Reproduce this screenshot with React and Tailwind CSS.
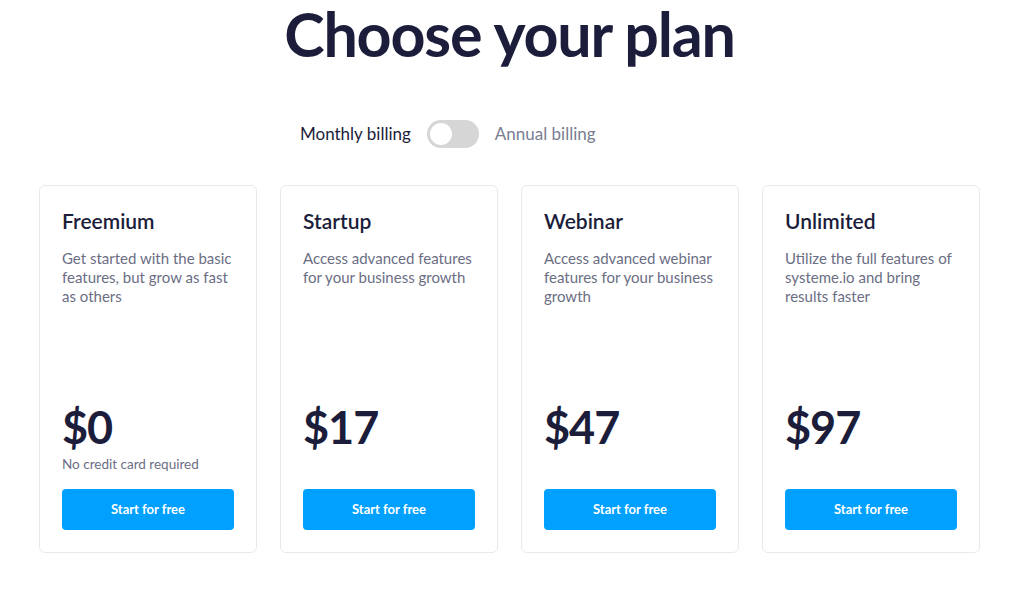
import React from 'react';

const plans = [
  {
    name: 'Freemium',
    desc: 'Get started with the basic features, but grow as fast as others',
    price: '$0',
    note: 'No credit card required',
  },
  {
    name: 'Startup',
    desc: 'Access advanced features for your business growth',
    price: '$17',
  },
  {
    name: 'Webinar',
    desc: 'Access advanced webinar features for your business growth',
    price: '$47',
  },
  {
    name: 'Unlimited',
    desc: 'Utilize the full features of systeme.io and bring results faster',
    price: '$97',
  },
];

const PlanCard = ({ plan }) => (
  <div className="flex flex-col rounded-md border border-[#e8e9ee] bg-white px-[22px] pt-[22px] pb-[22px]">
    <h3 className="text-[21px] font-semibold leading-[26px] text-[#1b1d3a]">{plan.name}</h3>
    <p className="mt-[15px] text-[15px] leading-[19px] text-[#6b6e84]">{plan.desc}</p>
    <div className="mt-auto">
      <div className="text-[45px] font-bold leading-[48px] tracking-[-1px] text-[#1b1d3a]">{plan.price}</div>
      <div className="h-[26px] pt-[4px] text-[13.5px] leading-[18px] text-[#6b6e84]">{plan.note}</div>
      <button className="mt-[12px] h-[41px] w-full rounded-[4px] bg-[#00a0ff] text-[13px] font-bold text-white">
        Start for free
      </button>
    </div>
  </div>
);

export default function App() {
  return (
    <div className="min-h-[594px] bg-white font-['Lato','Liberation_Sans',sans-serif]">
      <h1 className="ml-[-5px] text-center text-[61px] font-bold leading-[68px] tracking-[-1.2px] text-[#1b1d3a]">
        Choose your plan
      </h1>
      <div className="mt-[52px] flex items-center gap-4 pl-[300px]">
        <span className="text-[17px] text-[#1b1d3a]">Monthly billing</span>
        <div className="flex h-[28px] w-[52px] items-center rounded-full bg-[#d6d6d6] p-[3px]">
          <div className="h-[22px] w-[22px] rounded-full bg-white" />
        </div>
        <span className="text-[17px] text-[#7a7d92]">Annual billing</span>
      </div>
      <div className="ml-[39px] mt-[37px] grid h-[368px] w-[941px] grid-cols-4 gap-[23px]">
        {plans.map((p) => (
          <PlanCard key={p.name} plan={p} />
        ))}
      </div>
    </div>
  );
}
